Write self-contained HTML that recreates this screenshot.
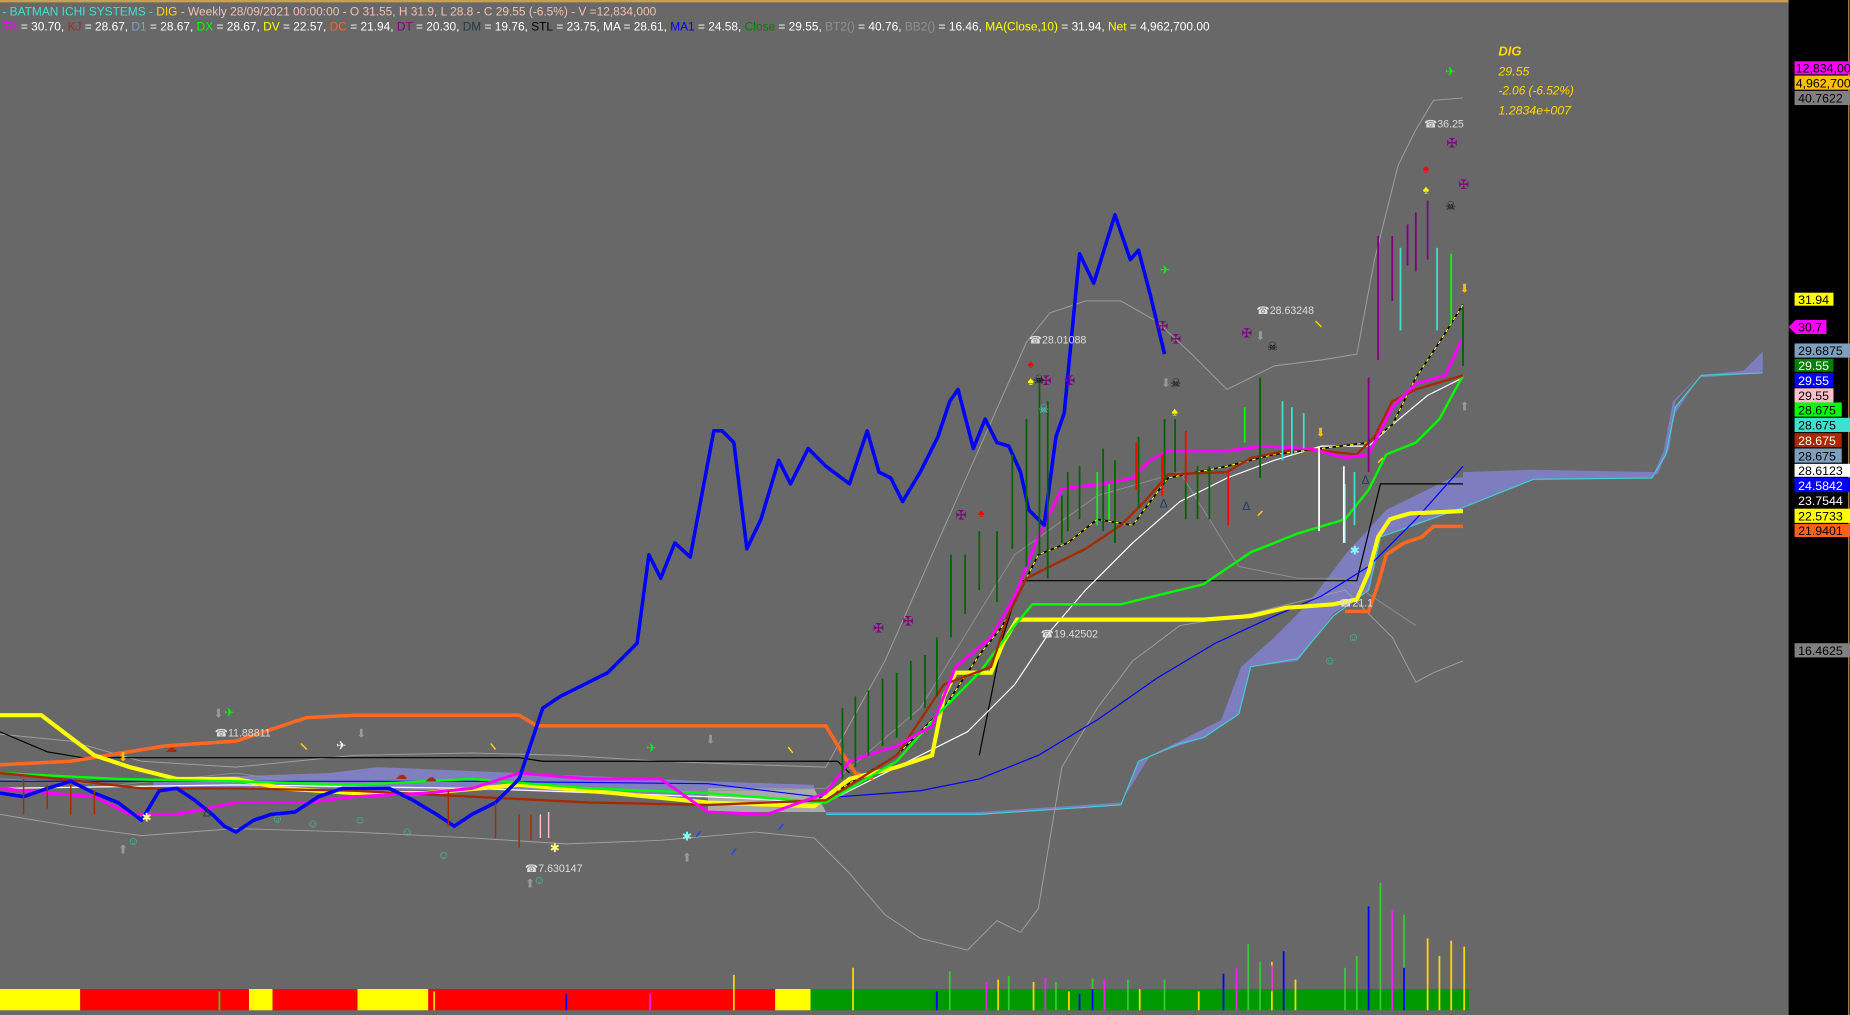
<!DOCTYPE html>
<html><head><meta charset="utf-8"><style>
html,body{margin:0;padding:0;background:#686868;overflow:hidden}
svg{display:block}
text{font-family:"Liberation Sans",sans-serif}
</style></head><body>
<svg width="1850" height="1015" viewBox="0 0 1568 860" preserveAspectRatio="none" xmlns="http://www.w3.org/2000/svg">
<rect width="1568" height="860" fill="#686868"/>
<rect x="0" y="0" width="1516" height="2" fill="#c8a050"/>
<!-- right axis -->
<rect x="1516" y="0" width="52" height="860" fill="#000"/>
<line x1="1567" y1="0" x2="1567" y2="860" stroke="#c8a050"/>

<!-- header -->
<text x="2" y="13" font-size="10.1" fill="#40e0d0">- BATMAN  ICHI SYSTEMS - <tspan fill="#ffd700">DIG</tspan><tspan fill="#f4c0b0"> - Weekly 28/09/2021 00:00:00 - O 31.55, H 31.9, L 28.8 - C 29.55 (-6.5%) - V =12,834,000</tspan></text>
<text x="2" y="26" font-size="10.1" fill="#fff"><tspan fill="#ff00ff">TK</tspan> = 30.70, <tspan fill="#a52a2a">KJ</tspan> = 28.67, <tspan fill="#7fa0c0">D1</tspan> = 28.67, <tspan fill="#00ff00">DX</tspan> = 28.67, <tspan fill="#ffff00">DV</tspan> = 22.57, <tspan fill="#ff6020">DC</tspan> = 21.94, <tspan fill="#800080">DT</tspan> = 20.30, <tspan fill="#204040">DM</tspan> = 19.76, <tspan fill="#000">STL</tspan> = 23.75, MA = 28.61, <tspan fill="#0000ff">MA1</tspan> = 24.58, <tspan fill="#008000">Close</tspan> = 29.55, <tspan fill="#909090">BT2()</tspan> = 40.76, <tspan fill="#909090">BB2()</tspan> = 16.46, <tspan fill="#ffff00">MA(Close,10)</tspan> = 31.94, <tspan fill="#ffff00">Net</tspan> = 4,962,700.00</text>

<!-- info -->
<g font-family="Liberation Serif" font-style="italic" fill="#ffd700">
<text x="1270" y="47" font-size="11" font-weight="bold">DIG</text>
<text x="1270" y="64" font-size="10.5">29.55</text>
<text x="1270" y="80" font-size="10">-2.06 (-6.52%)</text>
<text x="1270" y="97" font-size="10.5">1.2834e+007</text>
</g>

<!-- cloud -->
<polygon fill="#7d7dc0" points="700,688 830,688 950,680 975,640 1000,628 1035,610 1052,565 1080,540 1110,510 1140,470 1175,432 1230,405 1290,402 1350,404 1405,402 1412,385 1420,345 1442,318 1476,316 1494,298 1494,316 1440,320 1420,350 1412,385 1400,405 1300,406 1240,430 1200,445 1170,455 1160,500 1130,520 1100,560 1060,565 1050,605 1020,625 990,635 965,645 950,682 830,690 700,690"/>
<polygon fill="#7d7dc0" points="1240,400 1300,398 1405,400 1415,380 1420,340 1440,318 1494,316 1494,298 1478,314 1440,318 1418,340 1410,382 1400,405 1240,408"/>
<polyline fill="none" stroke="#40d0d0" stroke-width="1" points="700,690 830,690 950,682 965,645 1000,630 1020,625 1050,605 1060,565 1100,558 1130,522 1160,500 1170,455 1240,430 1300,406 1400,405 1412,385 1420,345 1442,318 1494,316"/>
<polygon fill="#8080c0" points="130,660 280,655 320,650 440,655 600,662 690,665 690,680 440,670 300,668 130,668"/>
<polygon fill="#aaaaaa" points="600,668 690,668 700,688 600,688"/>

<!-- bollinger -->
<polyline fill="none" stroke="#a0a0a0" stroke-width="0.8" points="0,622 60,628 120,645 200,650 300,640 400,638 480,640 560,645 640,648 700,650 750,560 790,470 830,380 870,290 890,265 920,255 950,255 980,272 1010,300 1040,330 1080,310 1120,305 1150,300 1165,220 1185,140 1200,110 1215,85 1240,83"/>
<polyline fill="none" stroke="#a0a0a0" stroke-width="0.8" points="0,690 60,700 120,708 200,702 300,705 400,710 480,715 560,712 640,705 690,710 720,740 750,775 780,795 820,805 845,780 865,790 880,770 900,650 930,600 960,560 1000,530 1060,520 1100,510 1140,500 1160,520 1180,540 1200,578 1215,570 1240,560"/>
<polyline fill="none" stroke="#909090" stroke-width="0.8" points="0,660 100,665 200,655 300,670 400,668 500,672 600,670 700,668 780,600 860,470 930,420 1000,400 1050,480 1100,490 1140,490 1200,530"/>

<!-- black step -->
<polyline fill="none" stroke="#000" stroke-width="1" points="0,620 40,637 70,642 440,642 460,645 710,645 720,655"/>
<polyline fill="none" stroke="#000" stroke-width="1" points="830,640 850,540 865,492 1150,492 1170,410 1240,410"/>

<!-- thin blue MA -->
<polyline fill="none" stroke="#0000ff" stroke-width="1" points="0,662 200,662 400,662 600,664 700,676 780,670 830,660 880,640 930,610 980,575 1030,545 1080,522 1120,505 1160,480 1200,440 1240,395"/>
<!-- white -->
<polyline fill="none" stroke="#fff" stroke-width="1" points="0,668 200,665 400,668 600,675 700,680 760,650 820,620 860,580 890,535 920,500 960,460 1000,425 1040,405 1080,390 1120,378 1160,378 1180,360 1210,335 1240,320"/>
<!-- dashed yellow/black -->
<polyline fill="none" stroke="#000" stroke-width="1.4" points="700,676 760,640 800,600 830,555 850,530 880,470 905,460 930,440 960,445 990,405 1040,395 1080,385 1120,380 1160,375 1180,360 1200,320 1220,290 1240,258"/>
<polyline fill="none" stroke="#ffff00" stroke-width="1" stroke-dasharray="3 3" points="700,676 760,640 800,600 830,555 850,530 880,470 905,460 930,440 960,445 990,405 1040,395 1080,385 1120,380 1160,375 1180,360 1200,320 1220,290 1240,258"/>

<!-- orange thick -->
<polyline fill="none" stroke="#ff6820" stroke-width="3" points="0,648 60,645 140,632 200,628 260,608 300,606 440,606 455,615 700,615 715,640 725,655 740,660"/>
<polyline fill="none" stroke="#ff6820" stroke-width="3" points="1140,518 1160,518 1168,495 1175,470 1190,460 1205,455 1215,446 1240,446"/>
<!-- yellow thick -->
<polyline fill="none" stroke="#ffff00" stroke-width="3.5" points="0,606 35,606 60,625 80,640 110,650 150,660 200,660 240,668 300,672 360,672 440,665 520,672 600,680 690,683 720,660 760,650 790,640 800,590 810,570 840,570 850,545 862,525 1020,525 1060,522 1090,515 1130,512 1150,508 1160,485 1168,455 1178,440 1195,435 1240,433"/>
<!-- green -->
<polyline fill="none" stroke="#00ff00" stroke-width="2" points="0,655 100,660 200,662 300,665 400,660 500,668 600,672 700,680 760,645 800,600 830,570 860,530 875,512 950,512 1020,495 1060,468 1100,452 1140,440 1160,415 1175,385 1200,375 1220,355 1240,318"/>
<!-- brown -->
<polyline fill="none" stroke="#a52a00" stroke-width="2" points="0,655 50,660 120,668 200,668 300,670 400,675 500,680 600,682 700,678 760,640 800,580 840,565 855,520 870,490 900,475 920,465 950,445 970,425 990,402 1040,400 1060,388 1100,380 1150,385 1165,370 1180,340 1200,330 1240,318"/>
<!-- magenta -->
<polyline fill="none" stroke="#ff00ff" stroke-width="2.5" points="0,668 40,672 80,675 110,690 150,690 200,680 260,680 300,675 360,672 400,668 440,655 500,660 560,660 600,688 650,690 700,672 720,645 760,632 790,615 810,565 840,540 860,505 880,455 900,414 935,410 960,405 975,390 990,382 1040,382 1070,378 1110,380 1140,388 1160,385 1180,345 1200,325 1225,318 1240,285"/>
<!-- blue thick -->
<polyline fill="none" stroke="#0000ff" stroke-width="3" stroke-linejoin="round" points="0,672 20,675 40,668 60,662 80,672 100,680 120,695 135,670 150,668 165,678 180,690 190,700 200,705 215,695 230,690 250,688 270,675 290,668 310,668 330,668 350,678 370,690 385,700 400,690 420,680 440,660 460,600 475,590 495,580 515,570 540,545 550,470 560,490 572,460 585,472 605,365 612,365 622,375 633,465 645,440 660,390 670,410 685,380 700,395 720,410 735,365 745,400 755,405 765,425 780,400 795,370 805,340 812,330 825,380 835,355 845,375 855,378 865,400 872,432 885,445 895,370 902,350 915,215 927,240 945,182 958,220 965,212 975,250 987,300"/>

<!-- candles -->
<g stroke="#006400" stroke-width="1.5">
<line x1="714" y1="600" x2="714" y2="660"/><line x1="725" y1="590" x2="725" y2="650"/><line x1="736" y1="585" x2="736" y2="640"/><line x1="748" y1="575" x2="748" y2="632"/><line x1="760" y1="570" x2="760" y2="625"/><line x1="772" y1="560" x2="772" y2="610"/><line x1="784" y1="555" x2="784" y2="600"/><line x1="794" y1="540" x2="794" y2="590"/><line x1="806" y1="470" x2="806" y2="540"/><line x1="818" y1="470" x2="818" y2="520"/><line x1="830" y1="450" x2="830" y2="500"/><line x1="845" y1="450" x2="845" y2="510"/><line x1="858" y1="385" x2="858" y2="465"/><line x1="870" y1="355" x2="870" y2="480"/><line x1="881" y1="320" x2="881" y2="470"/><line x1="888" y1="340" x2="888" y2="490"/><line x1="900" y1="420" x2="900" y2="460"/>
<line x1="905" y1="400" x2="905" y2="450"/><line x1="915" y1="395" x2="915" y2="440"/><line x1="935" y1="380" x2="935" y2="450"/><line x1="945" y1="390" x2="945" y2="460"/><line x1="965" y1="370" x2="965" y2="430"/><line x1="987" y1="355" x2="987" y2="410"/><line x1="996" y1="355" x2="996" y2="400"/><line x1="1005" y1="390" x2="1005" y2="440"/><line x1="1015" y1="395" x2="1015" y2="440"/><line x1="1025" y1="395" x2="1025" y2="440"/><line x1="1068" y1="320" x2="1068" y2="405"/><line x1="1240" y1="260" x2="1240" y2="310"/>
</g>
<g stroke="#00ff00" stroke-width="1.5"><line x1="930" y1="400" x2="930" y2="445"/><line x1="940" y1="410" x2="940" y2="440"/><line x1="1055" y1="345" x2="1055" y2="375"/><line x1="1230" y1="215" x2="1230" y2="275"/></g>
<g stroke="#ff0000" stroke-width="1.5"><line x1="963" y1="375" x2="963" y2="415"/><line x1="985" y1="385" x2="985" y2="420"/><line x1="1005" y1="365" x2="1005" y2="410"/><line x1="1041" y1="400" x2="1041" y2="445"/></g>
<g stroke="#40e0d0" stroke-width="1.5"><line x1="1087" y1="340" x2="1087" y2="390"/><line x1="1095" y1="345" x2="1095" y2="385"/><line x1="1105" y1="350" x2="1105" y2="380"/><line x1="1140" y1="410" x2="1140" y2="460"/><line x1="1148" y1="400" x2="1148" y2="445"/><line x1="1187" y1="210" x2="1187" y2="280"/><line x1="1218" y1="210" x2="1218" y2="280"/></g>
<g stroke="#fff" stroke-width="1.5"><line x1="1118" y1="378" x2="1118" y2="450"/><line x1="1139" y1="395" x2="1139" y2="460"/></g>
<g stroke="#800080" stroke-width="1.5"><line x1="1160" y1="320" x2="1160" y2="400"/><line x1="1168" y1="200" x2="1168" y2="305"/><line x1="1180" y1="200" x2="1180" y2="255"/><line x1="1193" y1="190" x2="1193" y2="225"/><line x1="1200" y1="180" x2="1200" y2="230"/><line x1="1210" y1="170" x2="1210" y2="220"/></g>
<g stroke="#a52a00" stroke-width="1.2"><line x1="20" y1="660" x2="20" y2="690"/><line x1="40" y1="665" x2="40" y2="685"/><line x1="60" y1="665" x2="60" y2="690"/><line x1="80" y1="670" x2="80" y2="690"/><line x1="380" y1="670" x2="380" y2="700"/><line x1="420" y1="680" x2="420" y2="710"/><line x1="440" y1="690" x2="440" y2="718"/><line x1="450" y1="690" x2="450" y2="712"/></g>
<g stroke="#ffc0cb" stroke-width="1.2"><line x1="458" y1="690" x2="458" y2="710"/><line x1="465" y1="688" x2="465" y2="710"/></g>

<!-- markers -->
<g font-size="9" fill="#ddd">
<text x="1207" y="108">☎36.25</text>
<text x="872" y="291">☎28.01088</text>
<text x="1065" y="266">☎28.63248</text>
<text x="882" y="540">☎19.42502</text>
<text x="182" y="624">☎11.88811</text>
<text x="445" y="739">☎7.630147</text>
<text x="1135" y="514">☎21.1</text>
</g>
<g font-size="11" fill="#800080">
<text x="1226" y="125">✠</text><text x="1236" y="160">✠</text><text x="981" y="280">✠</text><text x="992" y="291">✠</text><text x="1052" y="286">✠</text><text x="882" y="326">✠</text><text x="902" y="326">✠</text><text x="810" y="440">✠</text><text x="765" y="530">✠</text><text x="740" y="536">✠</text>
</g>
<g font-size="10">
<text x="871" y="312" fill="#ff0000">♠</text><text x="871" y="326" fill="#ffff00">♠</text><text x="829" y="438" fill="#ff0000">♠</text><text x="1206" y="146" fill="#ff0000">♠</text><text x="1206" y="164" fill="#ffff00">♠</text><text x="993" y="352" fill="#ffff00">♠</text>
<text x="1225" y="64" fill="#00ff00">✈</text><text x="983" y="232" fill="#00ff00">✈</text><text x="190" y="607" fill="#00ff00">✈</text><text x="548" y="637" fill="#00ff00">✈</text><text x="285" y="635" fill="#fff">✈</text>
<text x="1237" y="248" fill="#ffc000">⬇</text><text x="1115" y="370" fill="#ffc000">⬇</text><text x="100" y="645" fill="#ffc000">⬇</text>
<text x="1237" y="348" fill="#999">⬆</text><text x="100" y="723" fill="#999">⬆</text><text x="445" y="752" fill="#999">⬆</text><text x="578" y="730" fill="#999">⬆</text>
<text x="181" y="608" fill="#999">⬇</text><text x="302" y="625" fill="#999">⬇</text><text x="598" y="630" fill="#999">⬇</text><text x="984" y="328" fill="#999">⬇</text><text x="1064" y="288" fill="#999">⬇</text>
<text x="1154" y="410" fill="#204060">Δ</text><text x="983" y="430" fill="#204060">Δ</text><text x="1053" y="432" fill="#204060">Δ</text><text x="172" y="692" fill="#204040">Δ</text>
<text x="108" y="716" fill="#40c0a0">☺</text><text x="1142" y="543" fill="#40c0a0">☺</text><text x="1122" y="563" fill="#40c0a0">☺</text><text x="230" y="697" fill="#40c0a0">☺</text><text x="260" y="701" fill="#40c0a0">☺</text><text x="300" y="698" fill="#40c0a0">☺</text><text x="340" y="708" fill="#40c0a0">☺</text><text x="371" y="728" fill="#40c0a0">☺</text><text x="452" y="749" fill="#40c0a0">☺</text>
<text x="1144" y="470" fill="#80ffff">✱</text><text x="120" y="696" fill="#ffff80">✱</text><text x="466" y="722" fill="#ffff80">✱</text><text x="578" y="712" fill="#80ffff">✱</text>
<text x="876" y="325" fill="#000">☠</text><text x="992" y="328" fill="#000">☠</text><text x="1074" y="297" fill="#000">☠</text><text x="1225" y="178" fill="#000">☠</text><text x="880" y="350" fill="#40e0d0">☠</text>
<text x="140" y="637" fill="#a52a00">☁</text><text x="335" y="660" fill="#a52a00">☁</text><text x="360" y="662" fill="#a52a00">☁</text>
</g>
<g stroke="#ffd700" stroke-width="1.2"><line x1="1115" y1="272" x2="1120" y2="277"/><line x1="1066" y1="437" x2="1070" y2="433"/><line x1="1168" y1="392" x2="1172" y2="388"/><line x1="255" y1="630" x2="260" y2="635"/><line x1="416" y1="630" x2="420" y2="635"/><line x1="668" y1="633" x2="672" y2="638"/></g>
<g stroke="#2040ff" stroke-width="1.2"><line x1="620" y1="724" x2="624" y2="719"/><line x1="660" y1="703" x2="664" y2="698"/><line x1="590" y1="709" x2="594" y2="704"/></g>

<!-- axis labels -->
<g font-size="10.5">
<rect x="1521" y="52" width="47" height="11" fill="#ff00ff"/><text x="1522" y="61.5" fill="#000">12,834,00</text>
<rect x="1521" y="64" width="47" height="12" fill="#ffc000"/><text x="1522" y="74" fill="#000">4,962,700</text>
<rect x="1521" y="77" width="47" height="12" fill="#808080"/><text x="1524" y="87" fill="#000">40.7622</text>
<rect x="1521" y="248" width="33" height="11" fill="#ffff00"/><text x="1524" y="257.5" fill="#000">31.94</text>
<polygon points="1516,277 1522,271 1548,271 1548,283 1522,283" fill="#ff00ff"/><text x="1524" y="281" fill="#000">30.7</text>
<rect x="1521" y="291" width="47" height="12" fill="#7f9fbf"/><text x="1524" y="301" fill="#000">29.6875</text>
<rect x="1521" y="304" width="33" height="11" fill="#008000"/><text x="1524" y="313.5" fill="#fff">29.55</text>
<rect x="1521" y="316" width="33" height="12" fill="#0000ff"/><text x="1524" y="326" fill="#fff">29.55</text>
<rect x="1521" y="329" width="33" height="12" fill="#ffc0cb"/><text x="1524" y="339" fill="#000">29.55</text>
<rect x="1521" y="341" width="40" height="12" fill="#00ff00"/><text x="1524" y="351" fill="#000">28.675</text>
<rect x="1521" y="354" width="47" height="12" fill="#40e0d0"/><text x="1524" y="364" fill="#000">28.675</text>
<rect x="1521" y="367" width="40" height="12" fill="#a52a00"/><text x="1524" y="377" fill="#fff">28.675</text>
<rect x="1521" y="380" width="40" height="12" fill="#7f9fbf"/><text x="1524" y="390" fill="#000">28.675</text>
<rect x="1521" y="393" width="47" height="11" fill="#fff"/><text x="1524" y="402.5" fill="#000">28.6123</text>
<rect x="1521" y="405" width="47" height="12" fill="#0000ff"/><text x="1524" y="415" fill="#fff">24.5842</text>
<text x="1524" y="428" fill="#fff">23.7544</text>
<rect x="1521" y="431" width="47" height="12" fill="#ffff00"/><text x="1524" y="441" fill="#000">22.5733</text>
<rect x="1521" y="444" width="47" height="11" fill="#ff6020"/><text x="1524" y="453.5" fill="#000">21.9401</text>
<rect x="1521" y="545" width="47" height="12" fill="#808080"/><text x="1524" y="555" fill="#000">16.4625</text>
</g>

<!-- bottom band -->
<rect x="0" y="838" width="68" height="18" fill="#ffff00"/>
<rect x="68" y="838" width="143" height="18" fill="#ff0000"/>
<rect x="211" y="838" width="20" height="18" fill="#ffff00"/>
<rect x="231" y="838" width="72" height="18" fill="#ff0000"/>
<rect x="303" y="838" width="60" height="18" fill="#ffff00"/>
<rect x="363" y="838" width="294" height="18" fill="#ff0000"/>
<rect x="657" y="838" width="30" height="18" fill="#ffff00"/>
<rect x="687" y="838" width="558" height="18" fill="#009900"/>
<!-- volume -->
<g stroke-width="1.5">
<g stroke="#ffd700"><line x1="622" y1="826" x2="622" y2="856"/><line x1="723" y1="820" x2="723" y2="856"/><line x1="368" y1="840" x2="368" y2="856"/><line x1="846" y1="830" x2="846" y2="856"/><line x1="876" y1="832" x2="876" y2="856"/><line x1="1078" y1="815" x2="1078" y2="856"/><line x1="1098" y1="830" x2="1098" y2="856"/><line x1="1210" y1="795" x2="1210" y2="856"/><line x1="1220" y1="810" x2="1220" y2="856"/><line x1="1230" y1="797" x2="1230" y2="856"/><line x1="1241" y1="802" x2="1241" y2="856"/><line x1="906" y1="840" x2="906" y2="856"/><line x1="966" y1="838" x2="966" y2="856"/><line x1="1016" y1="840" x2="1016" y2="856"/></g>
<g stroke="#33cc33"><line x1="805" y1="823" x2="805" y2="856"/><line x1="855" y1="827" x2="855" y2="856"/><line x1="1058" y1="800" x2="1058" y2="856"/><line x1="1068" y1="815" x2="1068" y2="856"/><line x1="1140" y1="820" x2="1140" y2="856"/><line x1="1150" y1="810" x2="1150" y2="856"/><line x1="1170" y1="748" x2="1170" y2="856"/><line x1="1190" y1="775" x2="1190" y2="856"/><line x1="926" y1="829" x2="926" y2="856"/><line x1="956" y1="830" x2="956" y2="856"/><line x1="987" y1="830" x2="987" y2="856"/><line x1="895" y1="832" x2="895" y2="856"/><line x1="186" y1="840" x2="186" y2="856"/></g>
<g stroke="#0000ff"><line x1="1160" y1="768" x2="1160" y2="856"/><line x1="1190" y1="820" x2="1190" y2="856"/><line x1="1088" y1="806" x2="1088" y2="856"/><line x1="1037" y1="825" x2="1037" y2="856"/><line x1="926" y1="838" x2="926" y2="856"/><line x1="915" y1="842" x2="915" y2="856"/><line x1="794" y1="840" x2="794" y2="856"/><line x1="480" y1="842" x2="480" y2="856"/></g>
<g stroke="#ee22ee"><line x1="1180" y1="771" x2="1180" y2="856"/><line x1="1078" y1="818" x2="1078" y2="840"/><line x1="886" y1="828" x2="886" y2="856"/><line x1="936" y1="830" x2="936" y2="856"/><line x1="1048" y1="820" x2="1048" y2="856"/><line x1="551" y1="842" x2="551" y2="856"/><line x1="836" y1="832" x2="836" y2="856"/></g>
</g>
</svg>
</body></html>
